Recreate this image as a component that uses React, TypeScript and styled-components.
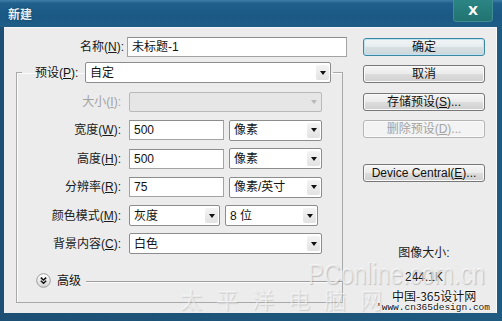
import React from 'react';
import styled, { createGlobalStyle } from 'styled-components';

const GlobalStyle = createGlobalStyle`
  html, body {
    margin: 0;
    padding: 0;
    background: #ffffff;
  }
  * {
    box-sizing: border-box;
  }
`;

const Window = styled.div`
  position: relative;
  width: 502px;
  height: 321px;
  display: flex;
  flex-direction: column;
  overflow: hidden;
  font-family: 'Liberation Sans', 'Noto Sans CJK SC', sans-serif;
  font-size: 12px;
  color: #111;
`;

const TitleBar = styled.div`
  height: 27px;
  display: flex;
  align-items: flex-start;
  justify-content: space-between;
  padding: 0 9px 0 8px;
  background: linear-gradient(180deg, #3f7ea6 0%, #1f5f8b 12%, #1b5984 60%, #1d5d86 100%);
`;

const Title = styled.div`
  margin-top: 7px;
  color: #e6eef3;
  font-family: 'Noto Sans CJK SC', sans-serif;
  font-size: 12px;
  line-height: 14px;
  font-weight: 700;
  text-shadow: 0 0 2px #0b3a58;
`;

const CloseButton = styled.div`
  width: 40px;
  height: 22px;
  display: flex;
  align-items: center;
  justify-content: center;
  background: linear-gradient(180deg, #2c8584 0%, #217371 100%);
  border: 1px solid #3f8f92;
  border-top: none;
  border-radius: 0 0 4px 4px;
  color: #ffffff;
  font-weight: 700;
  font-size: 13px;
  font-family: 'DejaVu Sans', sans-serif;
`;

const Frame = styled.div`
  flex: 1;
  display: flex;
  padding: 0 5px 8px 4px;
  background: linear-gradient(90deg, #1d4f74 0%, #1f5a80 100%);
`;

const Body = styled.div`
  flex: 1;
  display: flex;
  background: #ececec;
  border-top: 1px solid #f6f6f6;
  box-shadow: inset -7px 0 0 -6px #fafafa;
`;

const LeftCol = styled.div`
  width: 343px;
  padding-top: 9px;
  display: flex;
  flex-direction: column;
`;

const RightCol = styled.div`
  width: 122px;
  margin-left: 16px;
  padding-top: 10px;
  display: flex;
  flex-direction: column;
`;

const NameRow = styled.div`
  display: flex;
  align-items: center;
  height: 20px;
`;

const Label = styled.label<{ $width: number; $disabled?: boolean }>`
  width: ${(p) => p.$width}px;
  flex-shrink: 0;
  text-align: right;
  padding-right: 3px;
  line-height: 14px;
  white-space: nowrap;
  color: ${(p) => (p.$disabled ? '#a3a3a3' : '#1a1a1a')};
`;

const TextBox = styled.div<{ $width: number }>`
  width: ${(p) => p.$width}px;
  height: 20px;
  display: flex;
  align-items: center;
  padding-left: 4px;
  background: #ffffff;
  border: 1px solid #a3a3a3;
  border-top-color: #8c8c8c;
  line-height: 14px;
`;

const Select = styled.div<{ $width: number; $disabled?: boolean }>`
  width: ${(p) => p.$width}px;
  height: ${(p) => (p.$disabled ? 20 : 21)}px;
  display: flex;
  align-items: center;
  justify-content: space-between;
  padding: 0 1px 0 4px;
  background: ${(p) => (p.$disabled ? '#e6e6e6' : '#ffffff')};
  border: 1px solid ${(p) => (p.$disabled ? '#b9b9b9' : '#8d8d8d')};
  border-radius: 2px;
  line-height: 14px;
`;

const ArrowBox = styled.span<{ $disabled?: boolean }>`
  width: 13px;
  height: 15px;
  display: flex;
  align-items: center;
  justify-content: center;
  background: ${(p) => (p.$disabled ? 'transparent' : 'linear-gradient(180deg, #f4f4f4, #e2e2e2)')};
  border-radius: 2px;
  &::after {
    content: '';
    border-left: 3.5px solid transparent;
    border-right: 3.5px solid transparent;
    border-top: 4px solid ${(p) => (p.$disabled ? '#b8b8b8' : '#111')};
  }
`;

const Group = styled.fieldset`
  margin: 5px 0 0 12px;
  width: 327px;
  padding: 9px 0 12px 5px;
  border: 1px solid #a9a9a9;
  box-shadow: 1px 1px 0 #fbfbfb inset;
  min-inline-size: 0;
`;

const Legend = styled.legend`
  display: flex;
  align-items: center;
  padding: 0 2px 0 13px;
`;

const LegendLabel = styled.label`
  width: 50px;
  line-height: 14px;
  white-space: nowrap;
`;

const Rows = styled.div`
  display: flex;
  flex-direction: column;
  gap: 8.4px;
`;

const Row = styled.div`
  display: flex;
  align-items: center;
  height: 20px;
  gap: 5px;
`;

const Advanced = styled.div`
  display: flex;
  align-items: center;
  height: 18px;
  margin-top: 18px;
  padding-left: 14px;
`;

const AdvancedText = styled.span`
  margin-left: 6px;
  line-height: 14px;
`;

const Rule = styled.div`
  flex: 1;
  height: 1px;
  margin-left: 5px;
  margin-top: 1px;
  background: #9d9d9d;
  box-shadow: 0 1px 0 #fbfbfb;
`;

const Button = styled.div<{ $variant?: 'default' | 'disabled' }>`
  height: 18px;
  margin-bottom: 9.3px;
  display: flex;
  align-items: center;
  justify-content: center;
  border-radius: 3px;
  line-height: 14px;
  border: 1px solid
    ${(p) => (p.$variant === 'default' ? '#3d87a6' : p.$variant === 'disabled' ? '#b5b5b5' : '#777777')};
  background: ${(p) =>
    p.$variant === 'disabled'
      ? '#f3f3f3'
      : p.$variant === 'default'
      ? 'linear-gradient(180deg, #f1f5f6 0%, #e6ecee 50%, #d7dfe2 51%, #ccd6da 100%)'
      : 'linear-gradient(180deg, #f5f5f5 0%, #ebebeb 50%, #dddddd 51%, #cfcfcf 100%)'};
  box-shadow: ${(p) => (p.$variant === 'default' ? 'inset 0 0 0 1px #bfe3ef' : 'inset 0 0 0 1px #fafafa')};
  color: ${(p) => (p.$variant === 'disabled' ? '#a3a3a3' : '#111')};
`;

const Spacer = styled.div<{ $h: number }>`
  height: ${(p) => p.$h}px;
  flex-shrink: 0;
`;

const Info = styled.div`
  text-align: center;
  line-height: 14px;
  color: #1a1a1a;
`;

/* faint site watermark stamped over the lower right corner */
const Watermark = styled.div`
  position: absolute;
  left: 180px;
  top: 258px;
  width: 320px;
  pointer-events: none;
`;

const WatermarkBig = styled.div`
  margin-left: 128px;
  width: 190px;
  font-family: 'Liberation Sans', sans-serif;
  font-size: 30px;
  line-height: 32px;
  white-space: nowrap;
  transform: scaleX(0.78);
  transform-origin: left center;
  color: rgba(255, 255, 255, 0.6);
  text-shadow: 1px 1px 1px rgba(110, 110, 110, 0.35);
`;

const WatermarkCn = styled.div`
  margin-top: -4px;
  font-family: 'Noto Sans CJK SC', sans-serif;
  font-size: 22px;
  line-height: 24px;
  letter-spacing: 14px;
  white-space: nowrap;
  color: rgba(255, 255, 255, 0.5);
  text-shadow: 1px 1px 1px rgba(120, 120, 120, 0.25);
`;

const SiteName = styled.div`
  position: absolute;
  left: 392px;
  top: 288px;
  font-family: 'Noto Sans CJK SC', sans-serif;
  font-size: 12px;
  line-height: 15px;
  color: #111;
  text-shadow: 0 0 2px #fff, 0 0 2px #fff;
`;

const SiteUrl = styled.div`
  position: absolute;
  left: 376px;
  top: 302px;
  font-family: 'Liberation Mono', monospace;
  font-size: 9.5px;
  line-height: 11px;
  color: #111;
  text-shadow: 0 0 2px #fff, 0 0 2px #fff;
`;

const ExpandIcon = () => (
  <svg width="15" height="15" viewBox="0 0 15 15">
    <defs>
      <linearGradient id="eg" x1="0" y1="0" x2="0" y2="1">
        <stop offset="0" stopColor="#ffffff" />
        <stop offset="1" stopColor="#d6d6d6" />
      </linearGradient>
    </defs>
    <circle cx="7.5" cy="7.5" r="6.8" fill="url(#eg)" stroke="#9c9c9c" />
    <path d="M4.8 4.6 L7.5 7 L10.2 4.6 M4.8 7.8 L7.5 10.2 L10.2 7.8" fill="none" stroke="#111" strokeWidth="1.5" />
  </svg>
);

const Dropdown = ({ width, value, disabled }: { width: number; value?: string; disabled?: boolean }) => (
  <Select $width={width} $disabled={disabled}>
    <span>{value}</span>
    <ArrowBox $disabled={disabled} />
  </Select>
);

export default function App() {
  return (
    <Window>
      <GlobalStyle />
      <TitleBar>
        <Title>新建</Title>
        <CloseButton>X</CloseButton>
      </TitleBar>
      <Frame>
        <Body>
          <LeftCol>
            <NameRow>
              <Label $width={123}>
                名称(<u>N</u>):
              </Label>
              <TextBox $width={220}>未标题-1</TextBox>
            </NameRow>

            <Group>
              <Legend>
                <LegendLabel>
                  预设(<u>P</u>):
                </LegendLabel>
                <Dropdown width={246} value="自定" />
              </Legend>

              <Rows>
                <Row>
                  <Label $width={102} $disabled>
                    大小(<u>I</u>):
                  </Label>
                  <Dropdown width={193} disabled />
                </Row>
                <Row>
                  <Label $width={102}>
                    宽度(<u>W</u>):
                  </Label>
                  <TextBox $width={95}>500</TextBox>
                  <Dropdown width={93} value="像素" />
                </Row>
                <Row>
                  <Label $width={102}>
                    高度(<u>H</u>):
                  </Label>
                  <TextBox $width={95}>500</TextBox>
                  <Dropdown width={93} value="像素" />
                </Row>
                <Row>
                  <Label $width={102}>
                    分辨率(<u>R</u>):
                  </Label>
                  <TextBox $width={95}>75</TextBox>
                  <Dropdown width={93} value="像素/英寸" />
                </Row>
                <Row>
                  <Label $width={102}>
                    颜色模式(<u>M</u>):
                  </Label>
                  <Dropdown width={91} value="灰度" />
                  <Dropdown width={93} value="8 位" />
                </Row>
                <Row>
                  <Label $width={102}>
                    背景内容(<u>C</u>):
                  </Label>
                  <Dropdown width={193} value="白色" />
                </Row>
              </Rows>

              <Advanced>
                <ExpandIcon />
                <AdvancedText>高级</AdvancedText>
                <Rule />
              </Advanced>
            </Group>
          </LeftCol>

          <RightCol>
            <Button $variant="default">确定</Button>
            <Button>取消</Button>
            <Button>
              存储预设(<u>S</u>)...
            </Button>
            <Button $variant="disabled">
              删除预设(<u>D</u>)...
            </Button>
            <Spacer $h={17} />
            <Button>
              Device Central(<u>E</u>)...
            </Button>
            <Spacer $h={55} />
            <Info>图像大小:</Info>
            <Spacer $h={10} />
            <Info>244.1K</Info>
          </RightCol>
        </Body>
      </Frame>

      <Watermark>
        <WatermarkBig>PConline.com.cn</WatermarkBig>
        <WatermarkCn>太平洋电脑网</WatermarkCn>
      </Watermark>
      <SiteName>中国-365设计网</SiteName>
      <SiteUrl>'www.cn365design.com</SiteUrl>
    </Window>
  );
}
